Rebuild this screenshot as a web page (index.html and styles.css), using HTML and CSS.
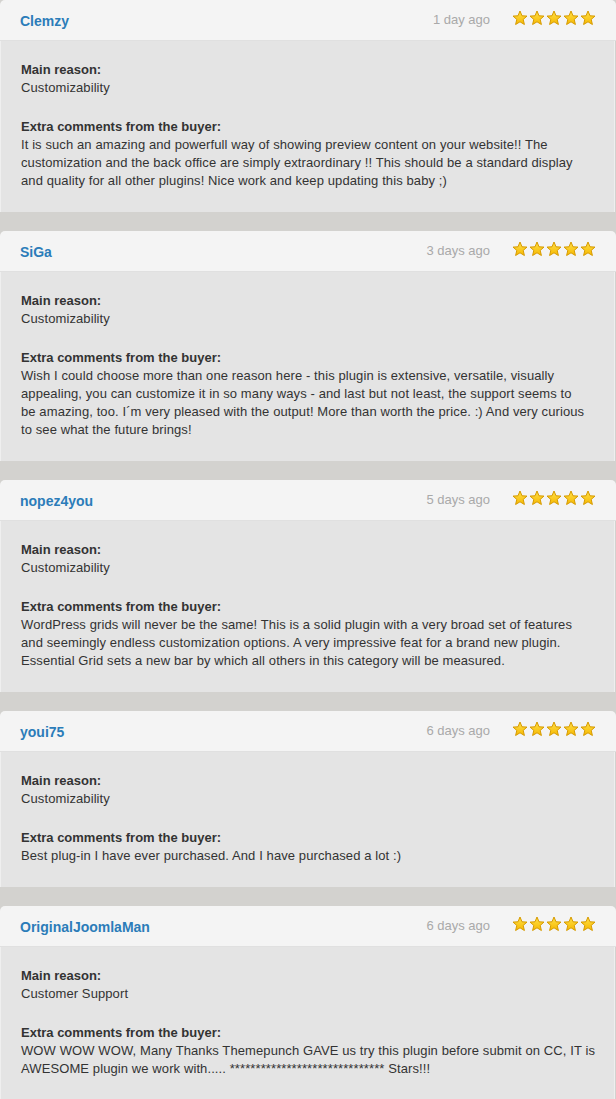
FILE: index.html
```html
<!DOCTYPE html>
<html lang="en">
<head>
    <meta charset="UTF-8">
    <meta name="viewport" content="width=device-width, initial-scale=1.0">
    <title>Reviews</title>
    <link rel="stylesheet" href="styles.css">
</head>
<body>
    <svg class="defs" width="0" height="0">
        <defs>
            <linearGradient id="starFill" x1="0" y1="0" x2="0" y2="1">
                <stop offset="0" stop-color="#ffe14a"/>
                <stop offset="1" stop-color="#f6b800"/>
            </linearGradient>
            <symbol id="star" viewBox="0 0 16 16">
                <polygon points="8,1 10,5.8 15,6.1 11.2,9.4 12.4,14.5 8,11.8 3.6,14.5 4.8,9.4 1,6.1 6,5.8"
                         fill="url(#starFill)" stroke="#d69a00" stroke-width="1" stroke-linejoin="round"/>
            </symbol>
        </defs>
    </svg>

    <div class="reviews">
        <div class="review">
            <div class="review-head">
                <span class="buyer">Clemzy</span>
                <span class="date">1 day ago</span>
                <span class="stars">
                    <svg><use href="#star"/></svg><svg><use href="#star"/></svg><svg><use href="#star"/></svg><svg><use href="#star"/></svg><svg><use href="#star"/></svg>
                </span>
            </div>
            <div class="review-body">
                <div class="label">Main reason:</div>
                <div>Customizability</div>
                <div class="label extra">Extra comments from the buyer:</div>
                <div>It is such an amazing and powerfull way of showing preview content on your website!! The customization and the back office are simply extraordinary !! This should be a standard display and quality for all other plugins! Nice work and keep updating this baby ;)</div>
            </div>
        </div>

        <div class="review">
            <div class="review-head">
                <span class="buyer">SiGa</span>
                <span class="date">3 days ago</span>
                <span class="stars">
                    <svg><use href="#star"/></svg><svg><use href="#star"/></svg><svg><use href="#star"/></svg><svg><use href="#star"/></svg><svg><use href="#star"/></svg>
                </span>
            </div>
            <div class="review-body">
                <div class="label">Main reason:</div>
                <div>Customizability</div>
                <div class="label extra">Extra comments from the buyer:</div>
                <div>Wish I could choose more than one reason here - this plugin is extensive, versatile, visually appealing, you can customize it in so many ways - and last but not least, the support seems to<br>be amazing, too. I´m very pleased with the output! More than worth the price. :) And very curious<br>to see what the future brings!</div>
            </div>
        </div>

        <div class="review">
            <div class="review-head">
                <span class="buyer">nopez4you</span>
                <span class="date">5 days ago</span>
                <span class="stars">
                    <svg><use href="#star"/></svg><svg><use href="#star"/></svg><svg><use href="#star"/></svg><svg><use href="#star"/></svg><svg><use href="#star"/></svg>
                </span>
            </div>
            <div class="review-body">
                <div class="label">Main reason:</div>
                <div>Customizability</div>
                <div class="label extra">Extra comments from the buyer:</div>
                <div>WordPress grids will never be the same! This is a solid plugin with a very broad set of features and seemingly endless customization options. A very impressive feat for a brand new plugin. Essential Grid sets a new bar by which all others in this category will be measured.</div>
            </div>
        </div>

        <div class="review">
            <div class="review-head">
                <span class="buyer">youi75</span>
                <span class="date">6 days ago</span>
                <span class="stars">
                    <svg><use href="#star"/></svg><svg><use href="#star"/></svg><svg><use href="#star"/></svg><svg><use href="#star"/></svg><svg><use href="#star"/></svg>
                </span>
            </div>
            <div class="review-body">
                <div class="label">Main reason:</div>
                <div>Customizability</div>
                <div class="label extra">Extra comments from the buyer:</div>
                <div>Best plug-in I have ever purchased. And I have purchased a lot :)</div>
            </div>
        </div>

        <div class="review">
            <div class="review-head">
                <span class="buyer">OriginalJoomlaMan</span>
                <span class="date">6 days ago</span>
                <span class="stars">
                    <svg><use href="#star"/></svg><svg><use href="#star"/></svg><svg><use href="#star"/></svg><svg><use href="#star"/></svg><svg><use href="#star"/></svg>
                </span>
            </div>
            <div class="review-body">
                <div class="label">Main reason:</div>
                <div>Customer Support</div>
                <div class="label extra">Extra comments from the buyer:</div>
                <div>WOW WOW WOW, Many Thanks Themepunch GAVE us try this plugin before submit on CC, IT is AWESOME plugin we work with..... ****************************** Stars!!!</div>
            </div>
        </div>
    </div>
</body>
</html>
```

FILE: styles.css
```css
* {
    margin: 0;
    padding: 0;
    box-sizing: border-box;
}

body {
    font-family: 'Liberation Sans', Arial, Helvetica, sans-serif;
    font-size: 13px;
    line-height: 18px;
    color: #333;
    background: #d3d2cf;
}

.defs {
    position: absolute;
    width: 0;
    height: 0;
}

.reviews {
    display: flex;
    flex-direction: column;
    gap: 19px;
}

.review-head {
    height: 41px;
    display: flex;
    align-items: center;
    padding: 0 20px;
    background: #f4f4f4;
    border-radius: 5px 5px 0 0;
    border-bottom: 1px solid #e0e0e0;
}

.buyer {
    font-size: 14px;
    font-weight: bold;
    color: #2b7cb9;
    margin-top: 2px;
    flex: 1;
}

.date {
    color: #a9a9a9;
    margin-top: -1px;
}

.stars {
    display: flex;
    gap: 1px;
    margin-left: 22px;
    margin-top: -4px;
}

.stars svg {
    width: 16px;
    height: 16px;
    display: block;
}

.review-body {
    background: #e4e4e4;
    border-left: 1px solid #efefef;
    border-right: 1px solid #efefef;
    margin-right: 1px;
    padding: 20px 17px 22px 20px;
    letter-spacing: 0.1px;
}

.label {
    font-weight: bold;
    letter-spacing: 0;
}

.extra {
    margin-top: 21px;
}
```
